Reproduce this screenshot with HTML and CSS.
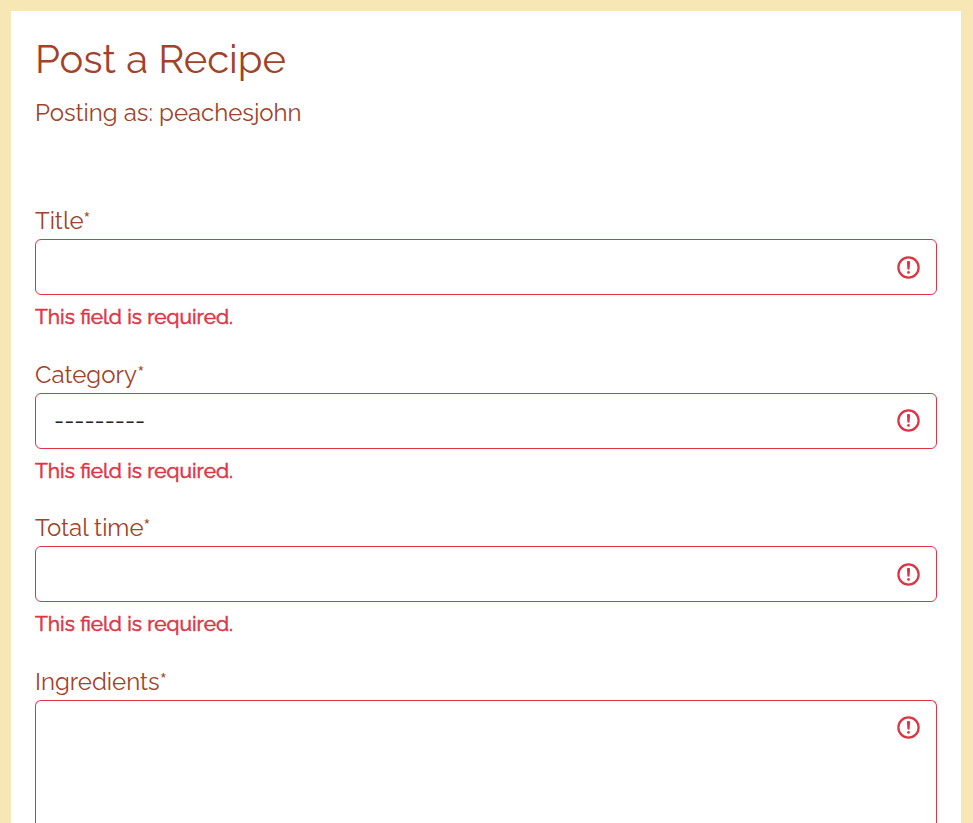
FILE: index.html
```html
<!DOCTYPE html>
<html lang="en">
<head>
<meta charset="utf-8">
<title>Post a Recipe</title>
<link rel="stylesheet" href="styles.css">
</head>
<body>
<main class="panel">
  <h1>Post a Recipe</h1>
  <p class="author">Posting as: peachesjohn</p>
  <form>
    <div class="group">
      <label>Title*</label>
      <div class="control"><svg class="icon" viewBox="0 0 12 12"><circle cx="6" cy="6" r="4.5"/><path d="M5.8 3.6h.4L6 6.5z"/><circle class="dot" cx="6" cy="8.2" r=".6"/></svg></div>
      <p class="error">This field is required.</p>
    </div>
    <div class="group">
      <label>Category*</label>
      <div class="control"><span class="value">---------</span><svg class="icon" viewBox="0 0 12 12"><circle cx="6" cy="6" r="4.5"/><path d="M5.8 3.6h.4L6 6.5z"/><circle class="dot" cx="6" cy="8.2" r=".6"/></svg></div>
      <p class="error">This field is required.</p>
    </div>
    <div class="group">
      <label>Total time*</label>
      <div class="control"><svg class="icon" viewBox="0 0 12 12"><circle cx="6" cy="6" r="4.5"/><path d="M5.8 3.6h.4L6 6.5z"/><circle class="dot" cx="6" cy="8.2" r=".6"/></svg></div>
      <p class="error">This field is required.</p>
    </div>
    <div class="group last">
      <label>Ingredients*</label>
      <div class="control area"><svg class="icon" viewBox="0 0 12 12"><circle cx="6" cy="6" r="4.5"/><path d="M5.8 3.6h.4L6 6.5z"/><circle class="dot" cx="6" cy="8.2" r=".6"/></svg></div>
    </div>
  </form>
</main>
</body>
</html>
```
FILE: styles.css
```css
* { box-sizing: border-box; }
body { margin: 0; height: 823px; overflow: hidden; padding: 11px 12px 0 11px; background: #f7e7b4; color: #a0432a; font-family: Raleway, Lato, sans-serif; font-size: 24px; font-weight: 400; }
.panel { height: 812px; overflow: hidden; padding: 24px 24px 0; background: #fff; }
h1, p { margin: 0; }
h1 { height: 48px; line-height: 48px; font-size: 40px; font-weight: 400; }
.author { margin-top: 12px; height: 36px; line-height: 36px; }
form { margin-top: 71px; }
.group { height: 153.5px; }
label { display: block; height: 37px; line-height: 38px; }
.control { display: flex; align-items: center; height: 56px; border: 1px solid #dc3545; border-radius: 6px; padding: 0 14px 0 18px; }
.last { height: 149px; }
.area { height: 140px; align-items: flex-start; border-bottom: 0; border-radius: 6px 6px 0 0; padding-top: 13px; }
.icon { width: 27px; height: 27px; margin-left: auto; fill: none; stroke: #dc3545; }
.icon path { stroke-linejoin: round; }
.icon .dot { fill: #dc3545; stroke: none; }
.value { color: #212529; }
.error { margin-top: 6px; height: 32px; line-height: 32px; color: #dc3545; font-size: 21px; -webkit-text-stroke: .6px #dc3545; }
```
